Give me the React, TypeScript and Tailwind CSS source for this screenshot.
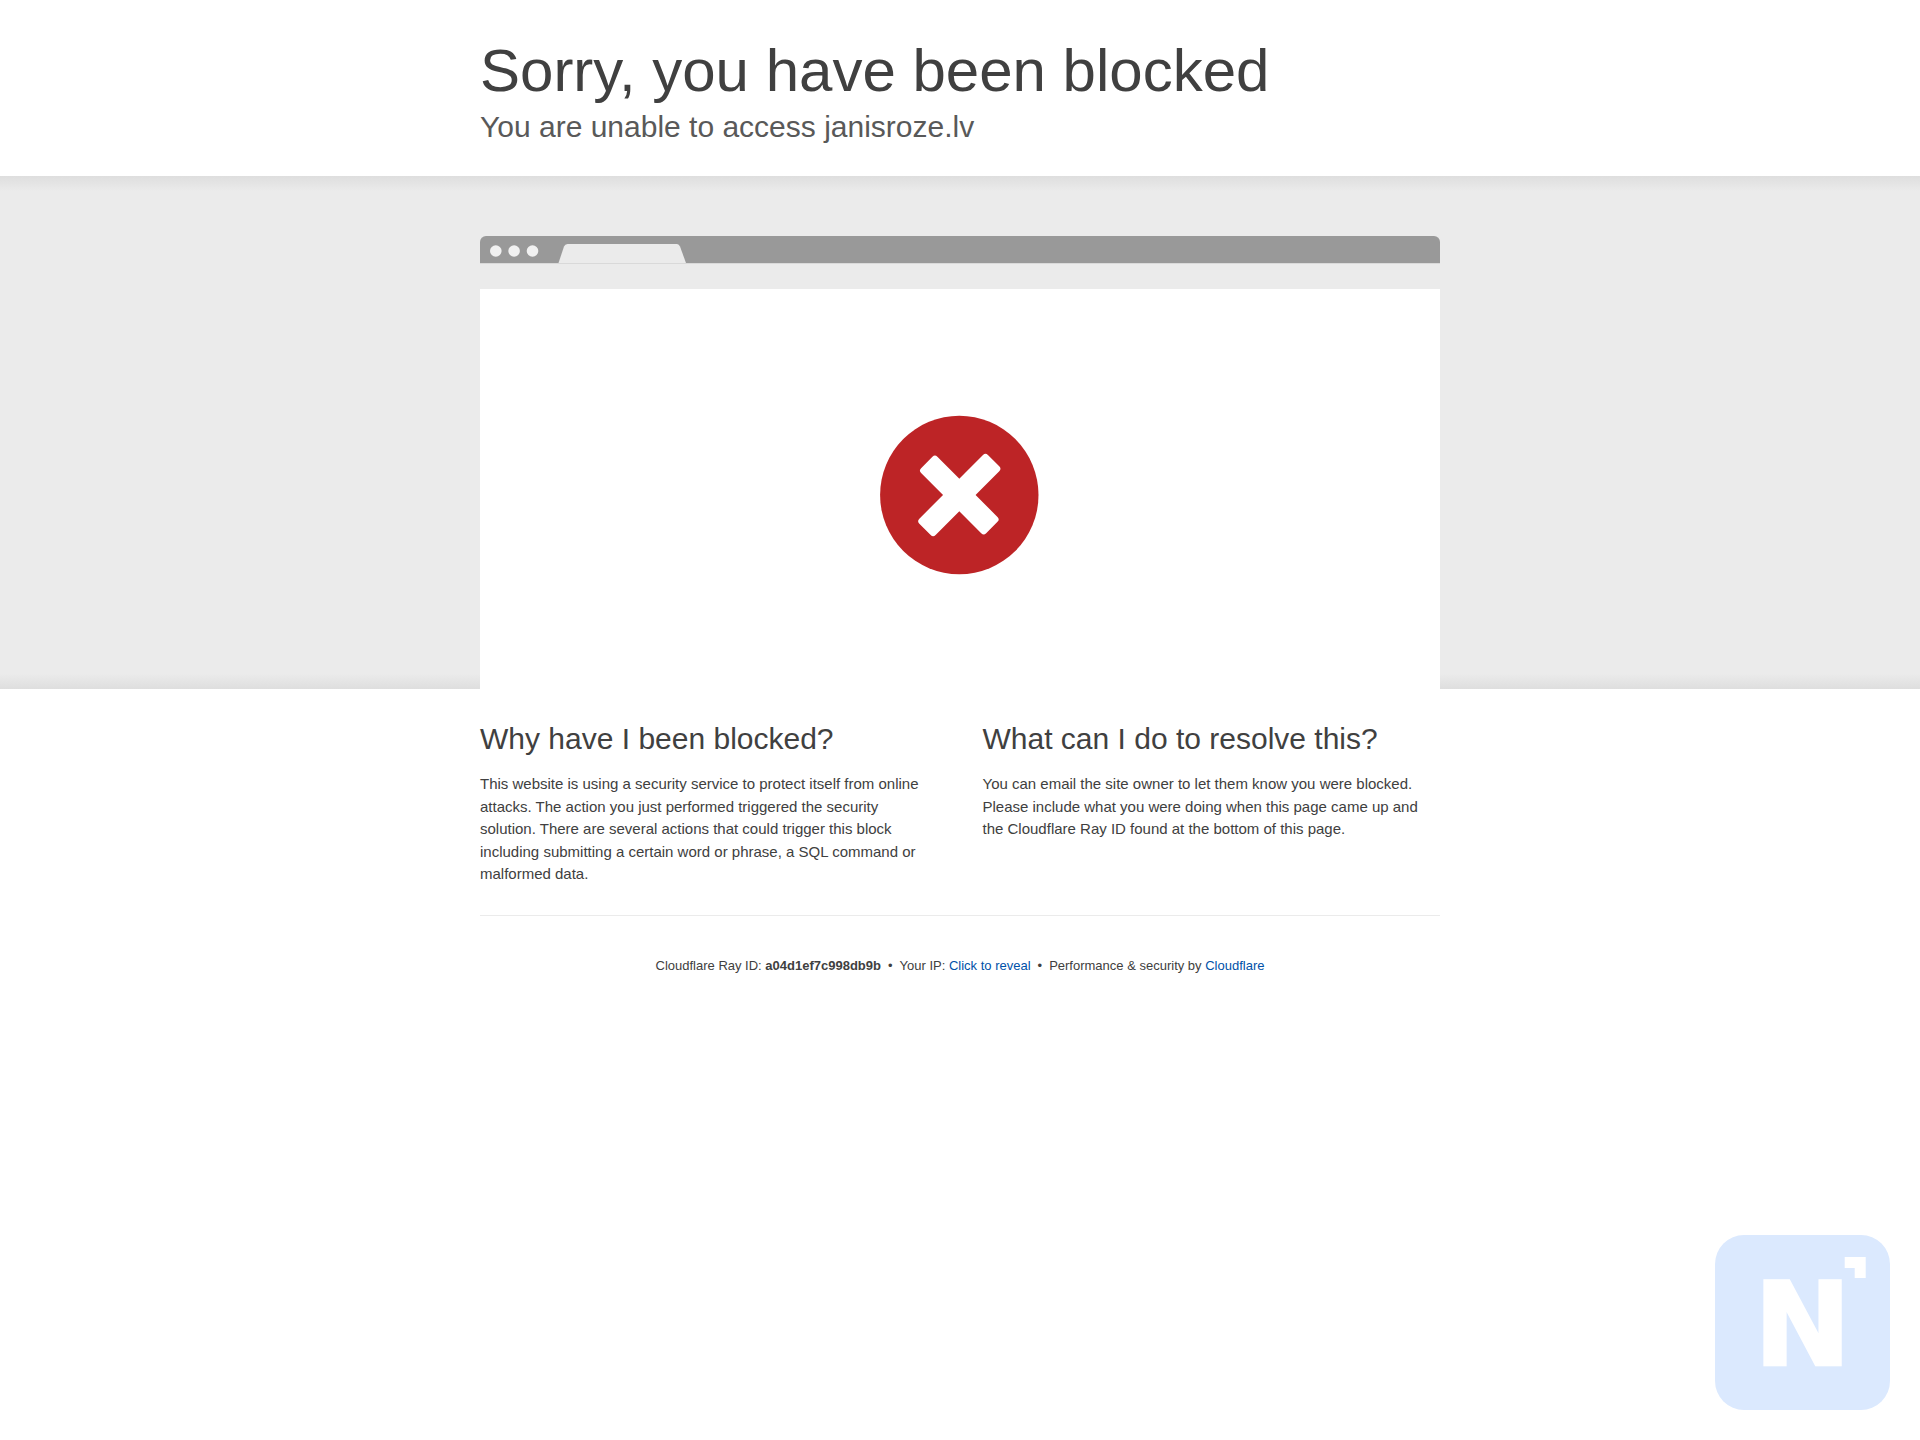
const reasons = [
  {
    title: "Why have I been blocked?",
    text: "This website is using a security service to protect itself from online attacks. The action you just performed triggered the security solution. There are several actions that could trigger this block including submitting a certain word or phrase, a SQL command or malformed data.",
  },
  {
    title: "What can I do to resolve this?",
    text: "You can email the site owner to let them know you were blocked. Please include what you were doing when this page came up and the Cloudflare Ray ID found at the bottom of this page.",
  },
];

function BrowserBar() {
  return (
    <div className="flex h-7 items-end gap-5 rounded-t-md border-b border-[#d9d9d9] bg-[#999] pl-2.5">
      <svg width="48" height="27" viewBox="0 0 48 27" overflow="visible" aria-hidden="true">
        <g fill="#f1f1f1">
          <circle cx="5.800" cy="15" r="5.800" />
          <circle cx="24.100" cy="15" r="5.800" />
          <circle cx="42.500" cy="15" r="5.800" />
        </g>
      </svg>
      <svg width="128" height="19" viewBox="0 0 128 19" aria-hidden="true">
        <path d="M0.500 19 L6 2.500 Q7 0 9.500 0 H119 Q121 0 122 2.500 L128 19 Z" fill="#ebebeb" />
      </svg>
    </div>
  );
}

function ErrorIcon() {
  return (
    <svg width="160" height="160" viewBox="0 0 160 160" aria-hidden="true">
      <circle cx="79.300" cy="80" r="79.200" fill="#bd2426" />
      <g fill="#fff">
        <rect x="33.300" y="68.500" width="92" height="23" rx="3.500" transform="rotate(45 79.300 80)" />
        <rect x="30.800" y="68.500" width="97" height="23" rx="3.500" transform="rotate(-45 79.300 80)" />
      </g>
    </svg>
  );
}

function CornerLogo() {
  return (
    <svg
      className="fixed bottom-[30px] right-[30px]"
      width="175"
      height="175"
      viewBox="0 0 175 175"
      aria-hidden="true"
    >
      <rect width="175" height="175" rx="29" fill="#dbe9fe" />
      <text
        x="87.500"
        y="129.800"
        textAnchor="middle"
        fontFamily="DejaVu Sans, sans-serif"
        fontWeight="700"
        fontSize="116"
        fill="#fff"
        stroke="#fff"
        strokeWidth="2.500"
      >
        N
      </text>
      <path d="M129.700 22 H150.700 V43 H139.700 V33 H129.700 Z" fill="#fff" />
    </svg>
  );
}

export default function App() {
  return (
    <div className="min-h-screen bg-white font-['Liberation_Sans',Arial,sans-serif] text-[15px] leading-normal text-[#404040]">
      <header className="mx-auto max-w-[960px] pb-[29px] pt-[35px]">
        <h1 className="text-[60px] leading-[72px]">Sorry, you have been blocked</h1>
        <h2 className="text-[30px] leading-10 text-[#595959]">You are unable to access janisroze.lv</h2>
      </header>

      <section className="bg-[linear-gradient(to_bottom,#dedede,#ebebeb_3%,#ebebeb_97%,#dedede)] pt-[60px]">
        <div className="mx-auto max-w-[960px]">
          <BrowserBar />
          <div className="mt-[25px] flex h-[400px] items-center justify-center bg-white pt-3">
            <ErrorIcon />
          </div>
        </div>
      </section>

      <main className="mx-auto max-w-[960px]">
        <div className="grid grid-cols-2 gap-[45px] pb-[29px] pt-[30px]">
          {reasons.map((r) => (
            <div key={r.title}>
              <h2 className="mb-[15px] text-[30px] leading-[39px]">{r.title}</h2>
              <p>{r.text}</p>
            </div>
          ))}
        </div>

        <footer className="border-t border-[#ebebeb] py-10 text-center text-[13px]">
          <span>
            Cloudflare Ray ID: <strong>a04d1ef7c998db9b</strong>
          </span>
          <span className="mx-[7px]">•</span>
          <span>
            Your IP:{" "}
            <button type="button" className="text-[#0051a8]">
              Click to reveal
            </button>
          </span>
          <span className="mx-[7px]">•</span>
          <span>
            Performance &amp; security by{" "}
            <a href="#cloudflare" className="text-[#0051a8]">
              Cloudflare
            </a>
          </span>
        </footer>
      </main>

      <CornerLogo />
    </div>
  );
}
